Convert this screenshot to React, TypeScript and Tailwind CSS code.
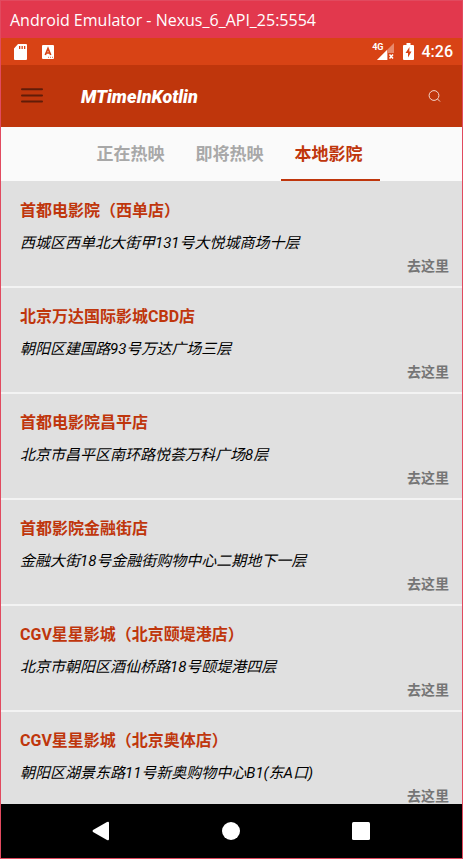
const cinemas = [
  { name: '首都电影院（西单店）', address: '西城区西单北大街甲131号大悦城商场十层' },
  { name: '北京万达国际影城CBD店', address: '朝阳区建国路93号万达广场三层' },
  { name: '首都电影院昌平店', address: '北京市昌平区南环路悦荟万科广场8层' },
  { name: '首都影院金融街店', address: '金融大街18号金融街购物中心二期地下一层' },
  { name: 'CGV星星影城（北京颐堤港店）', address: '北京市朝阳区酒仙桥路18号颐堤港四层' },
  { name: 'CGV星星影城（北京奥体店）', address: '朝阳区湖景东路11号新奥购物中心B1(东A口)' },
];

const tabs = ['正在热映', '即将热映', '本地影院'];

function StatusBar() {
  return (
    <div className="flex h-[27px] shrink-0 items-center bg-[#d84315] pr-[9px] pl-[13px] text-white">
      <svg width="13" height="16" viewBox="0 0 13 16" fill="currentColor" aria-hidden="true">
        <path fillRule="evenodd" d="M4 0H12Q13 0 13 1V15Q13 16 12 16H1Q0 16 0 15V4.500ZM5 2V5H6.300V2ZM7.500 2V5H8.800V2ZM10 2V5H11.300V2Z" />
      </svg>
      <svg className="ml-[15px]" width="12" height="14" viewBox="0 0 12 14" aria-hidden="true">
        <rect width="12" height="14" rx="1" fill="currentColor" />
        <path d="M3.300 10 6 3.500 8.700 10M4.300 8H7.700" fill="none" stroke="#d84315" strokeWidth="1.700" />
        <path d="M6 12.300H7M8 12.300H9M10 12.300H11" stroke="#d84315" strokeWidth="0.800" />
      </svg>
      <div className="ml-auto flex items-center">
        <span className="self-start text-[9px] leading-[10px] font-bold">4G</span>
        <svg className="-ml-[7px]" width="17" height="17" viewBox="0 0 17 17" aria-hidden="true">
          <path d="M17 0V10H11V17H0Z" fill="#e8896c" />
          <path d="M10 7V17H0Z" fill="currentColor" />
          <path d="m12.500 11.500 3.500 4M16 11.500l-3.500 4" stroke="currentColor" strokeWidth="1.500" />
        </svg>
        <svg className="ml-[9px]" width="11" height="17" viewBox="0 0 11 17" aria-hidden="true">
          <path d="M3.500 0H7.500V2H10Q11 2 11 3V16Q11 17 10 17H1Q0 17 0 16V3Q0 2 1 2H3.500Z" fill="currentColor" />
          <path d="M6.500 4 2.500 10H5V14.500L8.500 8.500H6.300Z" fill="#d84315" />
        </svg>
        <span className="ml-2 text-[16px] leading-5 font-medium">4:26</span>
      </div>
    </div>
  );
}

function Toolbar() {
  return (
    <header className="flex h-[62px] shrink-0 items-center bg-[#bf360c] pr-[21px] pl-5">
      <button type="button" aria-label="Menu" className="text-[#611c08]">
        <svg width="22" height="16" viewBox="0 0 22 16" aria-hidden="true">
          <path d="M1 1.200H21M1 7.400H21M1 13.600H21" stroke="currentColor" strokeWidth="2" strokeLinecap="round" />
        </svg>
      </button>
      <h1 className="ml-[38px] pt-0.5 text-[18px] leading-6 font-black text-white italic">MTimeInKotlin</h1>
      <button type="button" aria-label="Search" className="ml-auto text-[#f3d5cb]">
        <svg width="13" height="13" viewBox="0 0 13 13" fill="none" stroke="currentColor" aria-hidden="true">
          <circle cx="6" cy="5.500" r="4.900" />
          <path d="m9.500 9 2.500 2.500" />
        </svg>
      </button>
    </header>
  );
}

function Tabs() {
  return (
    <nav role="tablist" className="flex h-[54px] shrink-0 justify-center bg-[#fafafa]">
      {tabs.map((tab) => (
        <button
          key={tab}
          type="button"
          role="tab"
          aria-selected={tab === '本地影院'}
          className="w-[99px] border-b-2 border-transparent pt-1 pr-1 text-[17px] font-bold text-[#a8a8a8] aria-selected:border-[#bf360c] aria-selected:text-[#bf360c]"
        >
          {tab}
        </button>
      ))}
    </nav>
  );
}

function CinemaList() {
  return (
    <ul className="min-h-0 flex-1 overflow-y-auto bg-[#e0e0e0] pt-px [scrollbar-width:none]">
      {cinemas.map((cinema) => (
        <li key={cinema.name} className="flex flex-col border-b-2 border-[#f3f3f3] pt-[17px] pr-[13px] pb-2 pl-[19px]">
          <h2 className="text-[16px] leading-6 font-bold text-[#bf360c]">{cinema.name}</h2>
          <p className="mt-2 text-[15px] leading-6 text-black italic">{cinema.address}</p>
          <button type="button" className="self-end text-[14px] leading-[23px] font-bold text-[#757575]">
            去这里
          </button>
        </li>
      ))}
    </ul>
  );
}

function NavigationBar() {
  return (
    <div className="flex h-[54px] shrink-0 items-center justify-center gap-[112px] bg-black pr-0.5 text-white">
      <button type="button" aria-label="Back">
        <svg width="18" height="20" viewBox="0 0 18 20" fill="currentColor" aria-hidden="true">
          <path d="M1 9 15 1Q17 0 17 2V18Q17 20 15 19L1 11Q0 10 1 9Z" />
        </svg>
      </button>
      <button type="button" aria-label="Home">
        <svg width="18" height="18" viewBox="0 0 18 18" fill="currentColor" aria-hidden="true">
          <circle cx="9" cy="9" r="9" />
        </svg>
      </button>
      <button type="button" aria-label="Overview">
        <svg width="18" height="18" viewBox="0 0 18 18" fill="currentColor" aria-hidden="true">
          <rect width="18" height="18" rx="1.500" />
        </svg>
      </button>
    </div>
  );
}

export default function App() {
  return (
    <div className="flex h-screen flex-col border border-[#e14a5f] font-['Roboto','Noto_Sans_CJK_SC',sans-serif]">
      <div className="flex h-[37px] shrink-0 items-center bg-[#e2384d] px-[9px] font-['Open_Sans',sans-serif] text-[16px] text-white">
        Android Emulator - Nexus_6_API_25:5554
      </div>
      <StatusBar />
      <Toolbar />
      <Tabs />
      <CinemaList />
      <NavigationBar />
    </div>
  );
}
